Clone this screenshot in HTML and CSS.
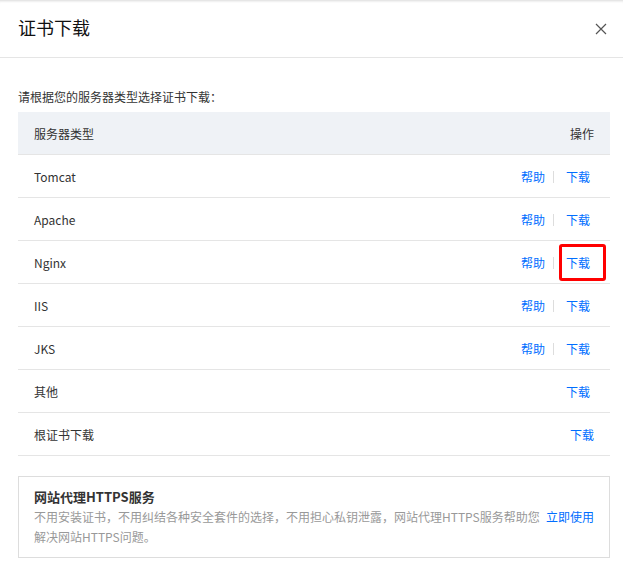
FILE: index.html
```html
<!DOCTYPE html>
<html lang="zh-CN">
<head>
    <meta charset="UTF-8">
    <title>证书下载</title>
    <link rel="stylesheet" href="styles.css">
</head>
<body>
    <div class="dialog">
        <div class="dialog-head">
            <h3>证书下载</h3>
            <span class="close">
                <svg width="12" height="12" viewBox="0 0 12 12"><path d="M1 1L11 11M11 1L1 11" stroke="#555" stroke-width="1.2" fill="none"/></svg>
            </span>
        </div>

        <div class="dialog-body">
            <p class="tip">请根据您的服务器类型选择证书下载：</p>
            <table class="cert-table">
                <thead>
                    <tr><th>服务器类型</th><th class="ops">操作</th></tr>
                </thead>
                <tbody>
                    <tr><td>Tomcat</td><td class="ops"><a>帮助</a><i class="sep"></i><a class="dl">下载</a></td></tr>
                    <tr><td>Apache</td><td class="ops"><a>帮助</a><i class="sep"></i><a class="dl">下载</a></td></tr>
                    <tr><td>Nginx</td><td class="ops"><a>帮助</a><i class="sep"></i><a class="dl marked">下载</a></td></tr>
                    <tr><td>IIS</td><td class="ops"><a>帮助</a><i class="sep"></i><a class="dl">下载</a></td></tr>
                    <tr><td>JKS</td><td class="ops"><a>帮助</a><i class="sep"></i><a class="dl">下载</a></td></tr>
                    <tr><td>其他</td><td class="ops"><a class="dl">下载</a></td></tr>
                    <tr><td>根证书下载</td><td class="ops"><a>下载</a></td></tr>
                </tbody>
            </table>

            <div class="promo">
                <h4>网站代理HTTPS服务</h4>
                <p>
                    <a class="use">立即使用</a>
                    不用安装证书，不用纠结各种安全套件的选择，不用担心私钥泄露，网站代理HTTPS服务帮助您<br>解决网站HTTPS问题。
                </p>
            </div>
        </div>
    </div>
</body>
</html>
```
FILE: styles.css
```css
body {
    margin: 0;
    background-color: #fff;
    font-family: "Noto Sans CJK SC", "Noto Sans", sans-serif;
    font-size: 12px;
    color: #333;
}
.dialog {
    border-top: 1px solid #e6e6e6;
    box-shadow: inset 0 2px 2px -1px #eee;
}
.dialog-head {
    display: flex;
    justify-content: space-between;
    align-items: center;
    height: 56px;
    padding: 0 16px 0 18px;
    border-bottom: 1px solid #e5e5e5;
}
.dialog-head h3 {
    margin: -5px 0 0;
    font-size: 18px;
    font-weight: normal;
    color: #111;
}
.close {
    display: flex;
    cursor: pointer;
}
.dialog-body {
    padding: 29px 13px 0 18px;
}
.tip {
    margin: 0 0 5px;
    line-height: 20px;
}
.cert-table {
    width: 100%;
    border-collapse: collapse;
}
.cert-table th, .cert-table td {
    height: 42px;
    padding: 0 16px;
    text-align: left;
    font-weight: normal;
    border-bottom: 1px solid #e5e5e5;
    white-space: nowrap;
}
.cert-table th {
    background-color: #eff2f6;
    color: #333;
}
.cert-table .ops {
    text-align: right;
}
.cert-table a {
    color: #006eff;
    cursor: pointer;
}
.sep {
    display: inline-block;
    width: 1px;
    height: 12px;
    margin: 0 8px;
    vertical-align: -1px;
    background-color: #ddd;
}
.dl {
    padding: 0 4px;
}
.marked {
    position: relative;
}
.marked::after {
    content: "";
    position: absolute;
    left: -3px;
    top: -10px;
    width: 41px;
    height: 31px;
    border: 3px solid #f00;
    border-radius: 3px;
}
.promo {
    margin-top: 20px;
    padding: 10px 15px 10px;
    border: 1px solid #ddd;
}
.promo h4 {
    margin: 0;
    font-size: 13px;
    line-height: 20px;
    color: #333;
}
.promo p {
    margin: 0;
    line-height: 20px;
    color: #999;
}
.use {
    float: right;
    color: #006eff;
    font-size: 12px;
    cursor: pointer;
}
```
